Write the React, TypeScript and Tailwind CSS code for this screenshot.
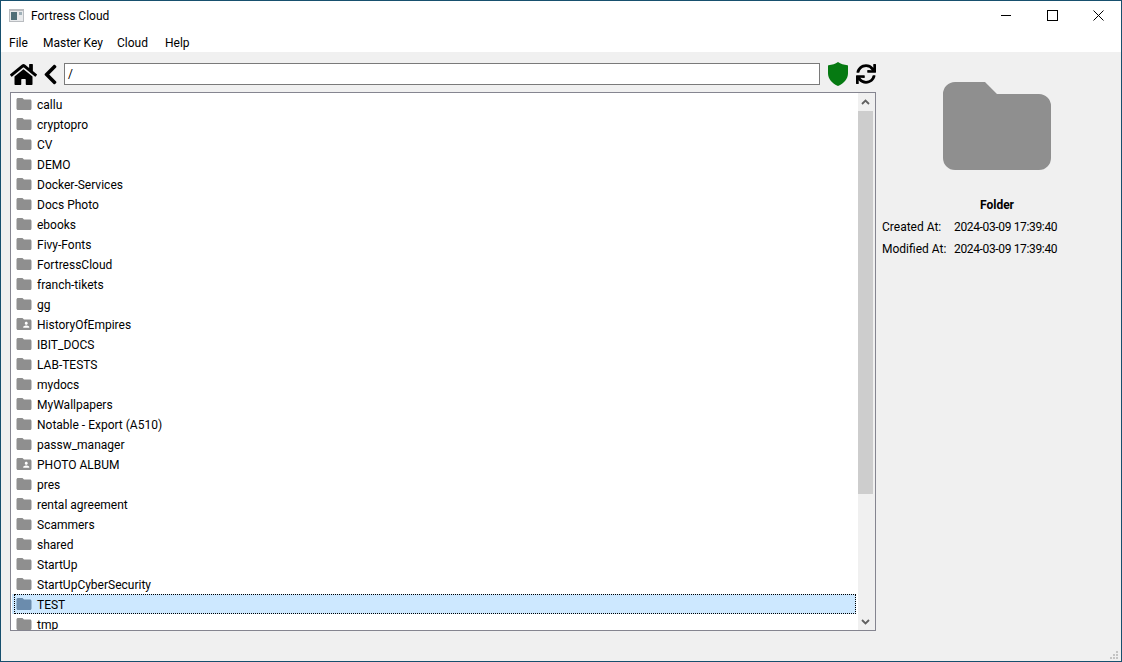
import { FaChevronLeft, FaHome, FaSync } from "react-icons/fa";
import { MdFolder, MdFolderShared } from "react-icons/md";

const folders = [
  { name: "callu" },
  { name: "cryptopro" },
  { name: "CV" },
  { name: "DEMO" },
  { name: "Docker-Services" },
  { name: "Docs Photo" },
  { name: "ebooks" },
  { name: "Fivy-Fonts" },
  { name: "FortressCloud" },
  { name: "franch-tikets" },
  { name: "gg" },
  { name: "HistoryOfEmpires", shared: true },
  { name: "IBIT_DOCS" },
  { name: "LAB-TESTS" },
  { name: "mydocs" },
  { name: "MyWallpapers" },
  { name: "Notable - Export (A510)" },
  { name: "passw_manager" },
  { name: "PHOTO ALBUM", shared: true },
  { name: "pres" },
  { name: "rental agreement" },
  { name: "Scammers" },
  { name: "shared" },
  { name: "StartUp" },
  { name: "StartUpCyberSecurity" },
  { name: "TEST", selected: true },
  { name: "tmp" },
];

function FolderRow({ name, shared, selected }: { name: string; shared?: boolean; selected?: boolean }) {
  const Icon = shared ? MdFolderShared : MdFolder;
  return (
    <div className={`h-5 shrink-0 pl-[2px] ${selected ? "bg-[#cde8ff]" : ""}`}>
      <div
        className={`flex h-full items-center border ${
          selected ? "border-dotted border-black" : "border-transparent"
        }`}
      >
        <Icon size={18} className={`-ml-[0.5px] shrink-0 ${selected ? "text-[#6b8cad]" : "text-[#8f8f8f]"}`} />
        <span className="ml-[4.5px] whitespace-nowrap pt-[2px]">{name}</span>
      </div>
    </div>
  );
}

export default function App() {
  return (
    <div
      className="relative flex h-[662px] w-[1122px] flex-col overflow-hidden border border-[#17506e] bg-[#f0f0f0] text-[12px] text-black"
      style={{ fontFamily: 'Roboto, "Noto Sans", sans-serif' }}
    >
      {/* Title bar */}
      <div className="flex h-[29px] shrink-0 items-center bg-white">
        <svg width="15" height="13" viewBox="0 0 15 13" className="ml-[8px] shrink-0">
          <rect x="0" y="0" width="15" height="13" fill="#b9bcc0" />
          <rect x="1" y="2" width="13" height="10" fill="#e8eaec" />
          <rect x="2" y="3" width="6" height="8" fill="#4f6f78" />
          <rect x="10" y="3" width="3" height="3" fill="#9fb0b8" />
        </svg>
        <span className="ml-[7px]">Fortress Cloud</span>
        <div className="ml-auto flex h-full">
          <div className="flex w-[46px] items-center justify-center pb-[1px]">
            <div className="h-px w-[10px] bg-black" />
          </div>
          <div className="flex w-[46px] items-center justify-center">
            <div className="h-[11px] w-[11px] border border-black" />
          </div>
          <div className="flex w-[46px] items-center justify-center">
            <svg width="11" height="11" viewBox="0 0 11 11" stroke="#000" strokeWidth="1" fill="none">
              <path d="M0.5 0.5 10.5 10.5M10.5 0.5 0.5 10.5" />
            </svg>
          </div>
        </div>
      </div>

      {/* Menu bar */}
      <div className="flex h-[22px] shrink-0 items-center bg-white pl-[8px] pt-[3px]">
        <span className="w-[34px]">File</span>
        <span className="w-[74px]">Master Key</span>
        <span className="w-[48px]">Cloud</span>
        <span>Help</span>
      </div>

      {/* Body */}
      <div className="flex min-h-0 flex-1">
        <div className="ml-[9px] mt-[8px] flex w-[866px] shrink-0 flex-col">
          {/* Toolbar */}
          <div className="flex h-[28px] shrink-0 items-center">
            <FaHome size={27} className="shrink-0 text-black" />
            <FaChevronLeft size={23} className="ml-[2px] shrink-0 text-black" />
            <div className="ml-[2px] flex h-[22px] w-[756px] shrink-0 items-center border border-[#7a7a7a] bg-white pl-[3px]">
              /
            </div>
            <svg width="20" height="24" viewBox="0 0 20 24" className="ml-[8px] shrink-0">
              <path
                d="M10 0C7.5 1.8 4 3 .5 3.2c-.3 0-.5.2-.5.5v7.6C0 17 4 21.500 10 24c6-2.500 10-7 10-12.700V3.700c0-.3-.2-.5-.5-.5C16 3 12.500 1.800 10 0Z"
                fill="#067a12"
              />
            </svg>
            <FaSync size={20} className="ml-[8px] shrink-0 text-black" />
          </div>

          {/* File list */}
          <div className="mt-[4px] flex h-[539px] shrink-0 overflow-hidden border border-[#858590] bg-white">
            <div className="flex min-w-0 flex-1 flex-col overflow-hidden pl-[1px] pr-[2px] pt-[1px]">
              {folders.map((folder) => (
                <FolderRow key={folder.name} {...folder} />
              ))}
            </div>
            <div className="flex w-[17px] shrink-0 flex-col bg-[#f0f0f0]">
              <div className="flex h-[18px] shrink-0 items-center justify-center pr-[2px]">
                <svg width="9" height="6" viewBox="0 0 9 6" fill="none" stroke="#606060" strokeWidth="1.800">
                  <path d="M1 5 4.500 1.500 8 5" />
                </svg>
              </div>
              <div className="h-[383px] w-[15px] shrink-0 bg-[#cdcdcd]" />
              <div className="flex flex-1 items-end justify-center pb-[5px] pr-[2px]">
                <svg width="9" height="6" viewBox="0 0 9 6" fill="none" stroke="#606060" strokeWidth="1.800">
                  <path d="M1 1 4.500 4.500 8 1" />
                </svg>
              </div>
            </div>
          </div>
        </div>

        {/* Details panel */}
        <div className="ml-[6px] mt-[8px] w-[230px] shrink-0">
          <div className="flex h-[130px] items-end justify-center pb-[20px]">
            <svg width="108" height="88" viewBox="0 0 108 88" fill="#8f8f8f">
              <path d="M12 0H42L54 12H96A12 12 0 0 1 108 24V76A12 12 0 0 1 96 88H12A12 12 0 0 1 0 76V12A12 12 0 0 1 12 0Z" />
            </svg>
          </div>
          <div className="mt-[5px] flex h-5 items-center justify-center font-bold">Folder</div>
          <div className="mt-[1px] flex h-[22px] items-center">
            <span className="w-[72px]">Created At:</span>
            <span className="tracking-[-0.35px]">2024-03-09 17:39:40</span>
          </div>
          <div className="flex h-[22px] items-center">
            <span className="w-[72px] whitespace-nowrap">Modified At:</span>
            <span className="tracking-[-0.35px]">2024-03-09 17:39:40</span>
          </div>
        </div>
      </div>

      {/* Size grip */}
      <svg width="8" height="8" viewBox="0 0 8 8" fill="#c4c4c4" className="absolute bottom-[2px] right-[3px]">
        <rect x="6" y="0" width="2" height="2" />
        <rect x="3" y="3" width="2" height="2" />
        <rect x="6" y="3" width="2" height="2" />
        <rect x="0" y="6" width="2" height="2" />
        <rect x="3" y="6" width="2" height="2" />
        <rect x="6" y="6" width="2" height="2" />
      </svg>
    </div>
  );
}
